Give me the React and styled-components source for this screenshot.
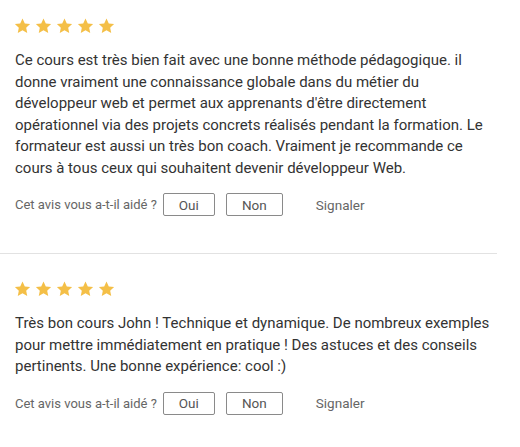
import React from "react";
import styled, { createGlobalStyle } from "styled-components";

const GlobalStyle = createGlobalStyle`
  body {
    margin: 0;
    background: #fff;
    font-family: Roboto, "Liberation Sans", sans-serif;
  }
`;

const reviews = [
  {
    id: 1,
    rating: 5,
    text:
      "Ce cours est très bien fait avec une bonne méthode pédagogique. il donne vraiment une connaissance globale dans du métier du développeur web et permet aux apprenants d'être directement opérationnel via des projets concrets réalisés pendant la formation. Le formateur est aussi un très bon coach. Vraiment je recommande ce cours à tous ceux qui souhaitent devenir développeur Web.",
  },
  {
    id: 2,
    rating: 5,
    text:
      "Très bon cours John ! Technique et dynamique. De nombreux exemples pour mettre immédiatement en pratique ! Des astuces et des conseils pertinents. Une bonne expérience: cool :)",
  },
];

const Star = () => (
  <svg width="17" height="16" viewBox="0 0 24 23">
    <path
      d="M12 0.8l3.3 7 7.6 0.9-5.6 5.2 1.5 7.6L12 17.7l-6.8 3.8 1.5-7.6L1.1 8.7l7.6-0.9z"
      fill="#f4bf47"
    />
  </svg>
);

const Review = ({ review }) => (
  <Item>
    <Stars>
      {Array.from({ length: review.rating }).map((_, i) => (
        <Star key={i} />
      ))}
    </Stars>
    <Text>{review.text}</Text>
    <Feedback>
      <Question>Cet avis vous a-t-il aidé ?</Question>
      <VoteButton $w={52}>Oui</VoteButton>
      <VoteButton $w={57}>Non</VoteButton>
      <Report>Signaler</Report>
    </Feedback>
  </Item>
);

const App = () => {
  return (
    <>
      <GlobalStyle />
      <List>
        {reviews.map((r) => (
          <Review key={r.id} review={r} />
        ))}
      </List>
    </>
  );
};

export default App;

const List = styled.div`
  width: 497px;
`;

const Item = styled.section`
  padding: 18px 15px 37px 15px;
  border-bottom: 1px solid #e2e2e2;

  &:last-child {
    border-bottom: none;
  }

  & + & {
    padding-top: 27px;
  }
`;

const Stars = styled.div`
  display: flex;
  gap: 4px;
  margin-left: -1px;
`;

const Text = styled.p`
  margin: 16px -13px 0 0;
  font-size: 15px;
  line-height: 21.5px;
  color: #333;
`;

const Feedback = styled.div`
  display: flex;
  align-items: center;
  margin-top: 14px;
  font-size: 13px;
  color: #666;
`;

const Question = styled.span`
  margin-right: 6px;
`;

const VoteButton = styled.button`
  width: ${({ $w }) => $w}px;
  height: 23px;
  margin-right: 11px;
  padding: 0;
  background: #fff;
  border: 1px solid #8a8a8a;
  border-radius: 2px;
  font-family: inherit;
  font-size: 13.5px;
  color: #555;
`;

const Report = styled.span`
  margin-left: 22px;
  font-size: 13.5px;
  color: #666;
`;
